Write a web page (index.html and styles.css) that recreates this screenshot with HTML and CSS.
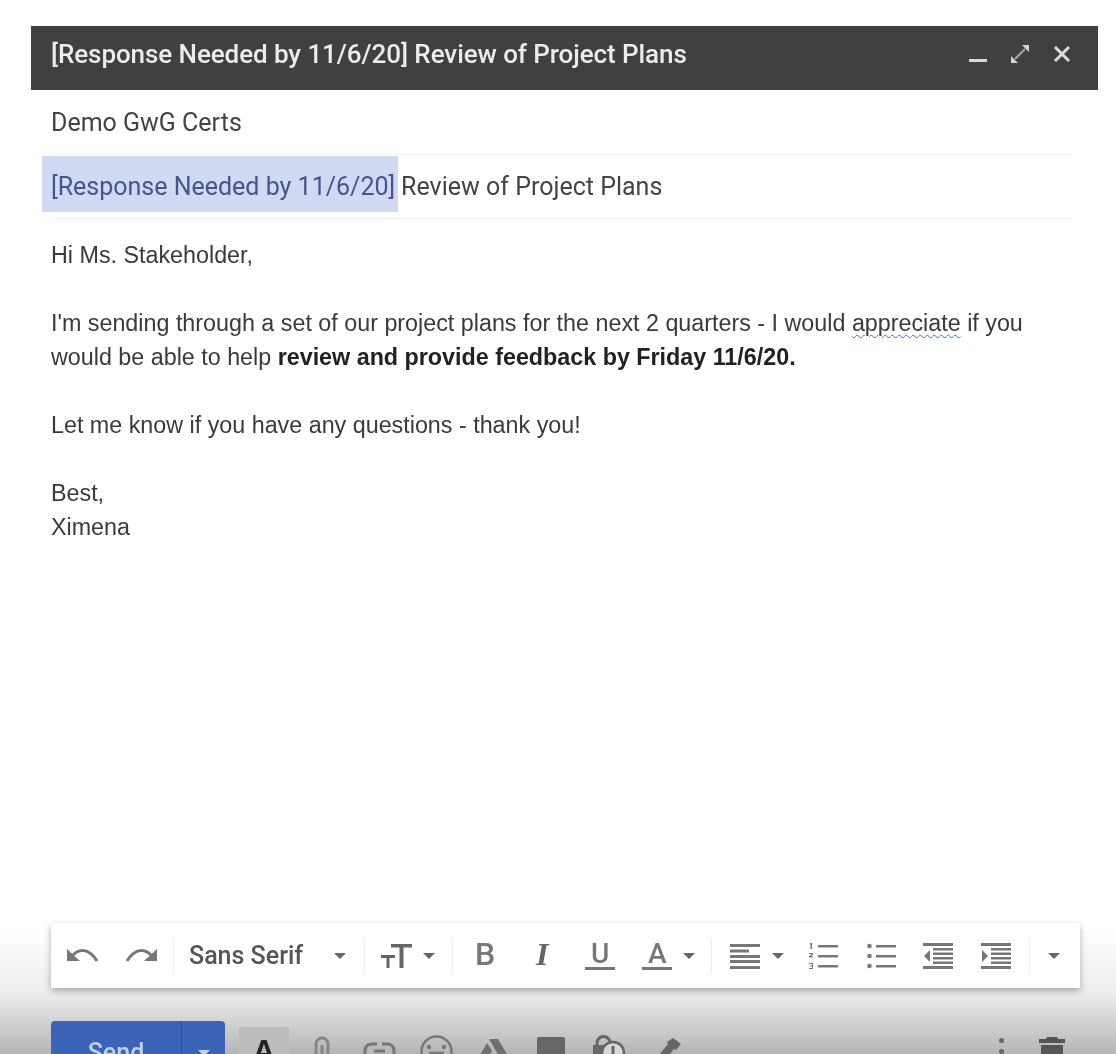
FILE: index.html
```html
<!DOCTYPE html>
<html lang="en">
<head>
  <meta charset="UTF-8">
  <title>Compose</title>
  <link rel="stylesheet" href="styles.css">
</head>
<body>
  <div class="compose">
    <div class="titlebar">
      <span class="titlebar-text">[Response Needed by 11/6/20] Review of Project Plans</span>
      <div class="window-icons">
        <svg class="win-min" width="18" height="18" viewBox="0 0 18 18"><rect x="0" y="14" width="18" height="3" fill="#d8d8d8"/></svg>
        <svg class="win-max" width="18" height="18" viewBox="0 0 18 18"><path d="M11 0h7v7zM0 11l7 7h-7z" fill="#d4d4d4"/><path d="M14 4l-10 10" stroke="#a8a8a8" stroke-width="2"/></svg>
        <svg class="win-close" width="18" height="18" viewBox="0 0 18 18"><path d="M2 2l14 14M16 2l-14 14" stroke="#dcdcdc" stroke-width="3" fill="none"/></svg>
      </div>
    </div>

    <div class="field recipients">Demo GwG Certs</div>
    <div class="field subject"><span class="selected">[Response Needed by 11/6/20]</span>Review of Project Plans</div>

    <div class="message">
      <p>Hi Ms. Stakeholder,</p>
      <p>I'm sending through a set of our project plans for the next 2 quarters - I would <span class="squiggle">appreciate</span> if you<br>would be able to help <b>review and provide feedback by Friday 11/6/20.</b></p>
      <p>Let me know if you have any questions - thank you!</p>
      <p>Best,<br>Ximena</p>
    </div>

    <div class="format-bar">
      <svg class="ic" width="32" height="20" viewBox="0 0 32 20"><path d="M0 3v12h13z" fill="#777"/><path d="M5 10c7-8 17-8 25 5" fill="none" stroke="#777" stroke-width="3"/></svg>
      <svg class="ic redo" width="32" height="20" viewBox="0 0 32 20"><path d="M32 3v12h-13z" fill="#777"/><path d="M27 10c-7-8-17-8-25 5" fill="none" stroke="#777" stroke-width="3"/></svg>
      <span class="sep undo-sep"></span>
      <span class="font-name">Sans Serif</span>
      <span class="caret font-caret"></span>
      <span class="sep font-sep"></span>
      <svg class="ic size" width="32" height="26" viewBox="0 0 32 26"><path d="M10 1h21v3.500h-8.500v20.500h-4v-20.500h-8.500zM0 12h14v3h-5.500v10h-3v-10h-5.500z" fill="#666"/></svg>
      <span class="caret size-caret"></span>
      <span class="sep size-sep"></span>
      <span class="glyph bold">B</span>
      <span class="glyph italic">I</span>
      <span class="glyph under">U</span>
      <span class="glyph color">A</span>
      <span class="caret color-caret"></span>
      <span class="sep color-sep"></span>
      <svg class="ic align" width="30" height="26" viewBox="0 0 30 26"><path d="M0 1h30v3h-30zM0 6.500h19v3h-19zM0 12h30v3h-30zM0 17h30v3h-30zM0 23h30v3h-30z" fill="#777"/></svg>
      <span class="caret align-caret"></span>
      <svg class="ic olist" width="30" height="28" viewBox="0 0 30 28"><path d="M10 3h20v2.500h-20zM10 13h20v2.500h-20zM10 23h20v2.500h-20zM2 1h2v6h-1.500v-4.500h-1zM1 11h4v1.500l-2 2h2v1h-4v-1l2.500-2.500h-2.500zM1 21h4v6h-4v-1h3v-1.500h-2v-1h2v-1.500h-3z" fill="#777"/></svg>
      <svg class="ic ulist" width="30" height="28" viewBox="0 0 30 28"><path d="M10 3h20v2.500h-20zM10 13h20v2.500h-20zM10 23h20v2.500h-20z" fill="#777"/><circle cx="3.500" cy="4" r="2.300" fill="#777"/><circle cx="3.500" cy="14" r="2.300" fill="#777"/><circle cx="3.500" cy="24" r="2.300" fill="#777"/></svg>
      <svg class="ic outdent" width="30" height="28" viewBox="0 0 30 28"><path d="M0 1h30v3h-30zM0 24h30v3h-30zM10 6h20v2.500h-20zM10 10.500h20v2.500h-20zM10 15h20v2.500h-20zM10 19.500h20v2.500h-20zM7 8v12l-6-6z" fill="#777"/></svg>
      <svg class="ic indent" width="30" height="28" viewBox="0 0 30 28"><path d="M0 1h30v3h-30zM0 24h30v3h-30zM10 6h20v2.500h-20zM10 10.500h20v2.500h-20zM10 15h20v2.500h-20zM10 19.500h20v2.500h-20zM1 8v12l6-6z" fill="#777"/></svg>
      <span class="sep last-sep"></span>
      <span class="caret more-caret"></span>
    </div>

    <div class="bottom-bar">
      <div class="send">
        <span class="send-label">Send</span>
        <span class="send-more"><span class="caret send-caret"></span></span>
      </div>
      <span class="format-toggle">A</span>
      <svg class="tool clip" width="18" height="30" viewBox="0 0 18 30"><path d="M3 30v-21a6 6 0 0 1 12 0v21M9 30v-20" fill="none" stroke="#858585" stroke-width="3"/></svg>
      <svg class="tool link" width="33" height="24" viewBox="0 0 33 24"><path d="M14 2h-6a6.500 6.500 0 0 0-6 7v6M19 2h6a6.500 6.500 0 0 1 6 7v6M11 9h11" fill="none" stroke="#777" stroke-width="3"/></svg>
      <svg class="tool smile" width="33" height="33" viewBox="0 0 33 33"><circle cx="16.500" cy="16.500" r="15" fill="none" stroke="#777" stroke-width="2.500"/><circle cx="9" cy="12" r="2.200" fill="#777"/><circle cx="24" cy="12" r="2.200" fill="#777"/><path d="M9 18h15" stroke="#777" stroke-width="2.500"/></svg>
      <svg class="tool drive" width="28" height="24" viewBox="0 0 28 24"><path d="M9 0h9l10 17h-9zM7 4l5 8-7 12-5-8z" fill="#707070"/></svg>
      <span class="tool photo"></span>
      <svg class="tool lock" width="34" height="30" viewBox="0 0 34 30"><path d="M5 11v-3a6.500 6.500 0 0 1 13 0v3" fill="none" stroke="#666" stroke-width="3"/><rect x="1" y="10" width="21" height="20" fill="#666"/><circle cx="21" cy="18" r="11" fill="#d8d8d8" stroke="#666" stroke-width="2.500"/><path d="M21 11v9" stroke="#666" stroke-width="3"/></svg>
      <svg class="tool pen" width="24" height="26" viewBox="0 0 24 26"><path d="M16 0l8 6-5 6-2-1-9 11-6-5 9-11-1-2z" fill="#666"/></svg>
      <span class="spacer"></span>
      <span class="dots"><i></i><i></i></span>
      <svg class="tool trash" width="26" height="30" viewBox="0 0 26 30"><path d="M8 0h10l1 2h7v4h-26v-4h7zM2 8h22v22h-22z" fill="#555"/></svg>
    </div>
  </div>
</body>
</html>
```

FILE: styles.css
```css
html, body {
  margin: 0;
  height: 100%;
  background: #fff;
  overflow: hidden;
}

.compose {
  width: 1116px;
  height: 1054px;
  padding-top: 26px;
  box-sizing: border-box;
  font-family: "Liberation Sans", Arial, sans-serif;
  color: #333;
  overflow: hidden;
  background: linear-gradient(to bottom, #fff 0, #fff 930px, #ececec 995px, #b4b4b4 1054px);
  filter: blur(0.6px);
}

.titlebar {
  margin: 0 18px 0 31px;
  height: 64px;
  background: #404040;
  display: flex;
  align-items: center;
  justify-content: space-between;
  padding: 0 27px 8px 20px;
  box-sizing: border-box;
}
.titlebar-text {
  font-family: Roboto, sans-serif;
  font-size: 26px;
  font-weight: 500;
  letter-spacing: -0.08px;
  color: #ececec;
  white-space: nowrap;
}
.window-icons {
  display: flex;
  align-items: center;
  gap: 24px;
}

.field {
  margin: 0 46px 0 51px;
  font-family: Roboto, sans-serif;
  font-size: 25px;
  color: #444;
  box-sizing: border-box;
  border-bottom: 1px solid #efefef;
  display: flex;
  align-items: center;
  white-space: nowrap;
}
.recipients { height: 65px; }
.subject { height: 64px; }
.selected {
  color: #44558f;
  background: #d2d9f2;
  margin: 1px 3px 0 -9px;
  padding: 0 3px 0 9px;
  height: 56px;
  line-height: 62px;
  align-self: flex-start;
}

.message {
  margin: 19px 60px 0 51px;
  font-size: 23.300px;
  line-height: 34px;
  color: #3a3a3a;
  height: 685px;
}
.message p { margin: 0 0 34px; }
.message b { color: #222; }
.squiggle {
  text-decoration: underline wavy #3f6fe0 1px;
  text-underline-offset: 3px;
}

.format-bar {
  margin-left: 51px;
  width: 1029px;
  height: 65px;
  background: #fff;
  box-shadow: 0 3px 7px rgba(0, 0, 0, 0.3);
  display: flex;
  align-items: center;
  box-sizing: border-box;
  padding-left: 16px;
  color: #666;
}
.format-bar svg { flex: none; }
.sep {
  width: 1px;
  height: 36px;
  background: #eee;
}
.caret {
  width: 0;
  height: 0;
  border-left: 6.500px solid transparent;
  border-right: 6.500px solid transparent;
  border-top: 6px solid #666;
}
.redo { margin-left: 26px; }
.undo-sep { margin-left: 16px; }
.font-name {
  font-family: Roboto, sans-serif;
  font-size: 25px;
  font-weight: 500;
  color: #555;
  margin-left: 15px;
}
.font-caret { margin-left: 31px; }
.font-sep { margin-left: 18px; }
.size { margin-left: 16px; }
.size-caret { margin-left: 10px; }
.size-sep { margin-left: 17px; }

.glyph {
  width: 30px;
  text-align: center;
  font-family: Roboto, sans-serif;
  font-size: 28px;
  font-weight: 500;
  color: #777;
  flex: none;
}
.bold {
  font-size: 32px;
  margin-left: 17px;
  margin-bottom: 3px;
}
.italic {
  font-family: "Liberation Serif", serif;
  font-size: 32px;
  font-weight: 700;
  font-style: italic;
  color: #666;
  margin-left: 27px;
  margin-bottom: 3px;
}
.under, .color {
  border-bottom: 3px solid #777;
  line-height: 26px;
}
.under { margin-left: 28px; }
.color { margin-left: 27px; }
.color-caret { margin-left: 11px; }
.color-sep { margin-left: 16px; }
.align { margin-left: 18px; }
.align-caret { margin-left: 12px; }
.olist { margin-left: 24px; }
.ulist { margin-left: 28px; }
.outdent { margin-left: 27px; }
.indent { margin-left: 28px; }
.last-sep { margin-left: 18px; }
.more-caret { margin-left: 18px; }

.bottom-bar {
  margin: 33px 51px 0 51px;
  display: flex;
  align-items: flex-start;
  height: 60px;
}
.send {
  width: 174px;
  height: 60px;
  background: #3a64b8;
  border-radius: 4px;
  display: flex;
  color: #c2d0ea;
  font-family: Roboto, sans-serif;
  font-size: 25px;
  font-weight: 500;
}
.send-label {
  flex: 1;
  text-align: center;
  line-height: 64px;
}
.send-more {
  width: 44px;
  border-left: 1px solid #2c4f96;
  display: flex;
  justify-content: center;
  padding-top: 29px;
  box-sizing: border-box;
}
.send-caret { border-top-color: #c4cfe6; }
.format-toggle {
  width: 50px;
  height: 50px;
  margin: 6px 0 0 14px;
  background: #bcbcbc;
  border-radius: 3px;
  font-size: 31px;
  font-weight: 700;
  line-height: 50px;
  text-align: center;
  color: #222;
}
.tool { flex: none; }
.clip { margin: 14px 0 0 24px; }
.link { margin: 21px 0 0 32px; }
.smile { margin: 14px 0 0 24px; }
.drive { margin: 18px 0 0 27px; }
.photo {
  width: 28px;
  height: 30px;
  margin: 16px 0 0 29px;
  background: #666;
  border-radius: 2px;
}
.lock { margin: 14px 0 0 27px; }
.pen { margin: 17px 0 0 31px; }
.spacer { flex: 1; }
.dots {
  display: flex;
  flex-direction: column;
  gap: 6px;
  margin: 17px 35px 0 0;
}
.dots i {
  width: 5px;
  height: 5px;
  border-radius: 50%;
  background: #666;
}
.trash { margin-top: 16px; }
```
